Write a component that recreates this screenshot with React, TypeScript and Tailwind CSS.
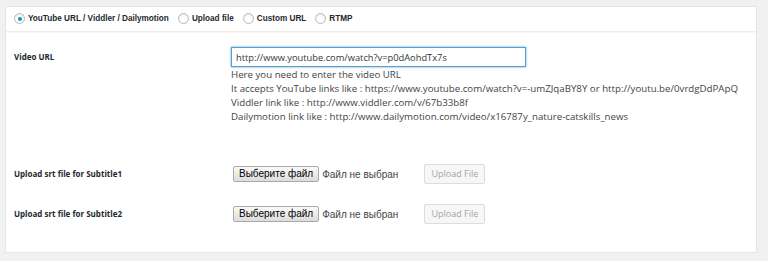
import React from 'react';

const tabs = [
  { id: 'youtube', label: 'YouTube URL / Viddler / Dailymotion', checked: true },
  { id: 'upload', label: 'Upload file', checked: false },
  { id: 'custom', label: 'Custom URL', checked: false },
  { id: 'rtmp', label: 'RTMP', checked: false },
];

const helpLines = [
  'Here you need to enter the video URL',
  'It accepts YouTube links like : https://www.youtube.com/watch?v=-umZJqaBY8Y or http://youtu.be/0vrdgDdPApQ',
  'Viddler link like : http://www.viddler.com/v/67b33b8f',
  'Dailymotion link like : http://www.dailymotion.com/video/x16787y_nature-catskills_news',
];

const Radio: React.FC<{ checked: boolean }> = ({ checked }) => (
  <span className="w-[11px] h-[11px] rounded-full border border-[#b4b9be] bg-white shadow-[inset_0_1px_2px_rgba(0,0,0,0.1)] flex items-center justify-center shrink-0">
    {checked && <span className="w-[4px] h-[4px] rounded-full bg-[#1e8cbe]" />}
  </span>
);

const FileRow: React.FC<{ label: string }> = ({ label }) => (
  <div className="flex items-center h-[20px]">
    <div className="w-[225px] pl-[8px] text-[8px] font-bold text-[#23282d] font-['Open_Sans',sans-serif] -mt-[1px]">{label}</div>
    <div className="flex items-center">
      <button className="h-[16px] px-[5px] ml-[2px] border border-[#a9a9a9] rounded-[2px] bg-gradient-to-b from-[#fafafa] to-[#dcdcdc] text-[10px] leading-none text-black font-['Liberation_Sans',sans-serif]">
        Выберите файл
      </button>
      <span className="ml-[3px] text-[10px] text-[#444] font-['Liberation_Sans',sans-serif]">Файл не выбран</span>
      <button disabled className="ml-[26px] h-[20px] w-[61px] border border-[#ddd] rounded-[2px] bg-[#f7f7f7] text-[9px] text-[#a0a5aa] font-['Open_Sans',sans-serif]">
        Upload File
      </button>
    </div>
  </div>
);

export default function App() {
  return (
    <div className="w-[768px] h-[261px] bg-[#f1f1f1] pt-[6px] pl-[5px] font-['Open_Sans',sans-serif]">
      <div className="w-[752px] h-[247px] bg-white border border-[#e5e5e5] flex flex-col">
        <div className="h-[25px] flex items-center pl-[8px] border-b border-[#eeeeee] shadow-[0_1px_1px_rgba(0,0,0,0.03)]">
          {tabs.map(tab => (
            <label key={tab.id} className="flex items-center mr-[9px]">
              <Radio checked={tab.checked} />
              <span className="ml-[3px] text-[8.2px] font-bold text-[#23282d] font-['Liberation_Sans',sans-serif]">{tab.label}</span>
            </label>
          ))}
        </div>

        <div className="flex pt-[15px]">
          <div className="w-[225px] pl-[8px] pt-[4px] text-[8px] font-bold text-[#23282d]">Video URL</div>
          <div className="flex flex-col">
            <input
              readOnly
              value="http://www.youtube.com/watch?v=p0dAohdTx7s"
              className="w-[295px] h-[20px] px-[4px] border border-[#5b9dd9] text-[9.3px] text-[#32373c] outline-none shadow-[0_0_2px_rgba(30,140,190,0.8)]"
            />
            <div className="mt-[1px] text-[9.7px] leading-[14px] text-[#444]">
              {helpLines.map(line => (
                <div key={line}>{line}</div>
              ))}
            </div>
          </div>
        </div>

        <div className="flex flex-col gap-[20px] mt-[40px]">
          <FileRow label="Upload srt file for Subtitle1" />
          <FileRow label="Upload srt file for Subtitle2" />
        </div>
      </div>
    </div>
  );
}
